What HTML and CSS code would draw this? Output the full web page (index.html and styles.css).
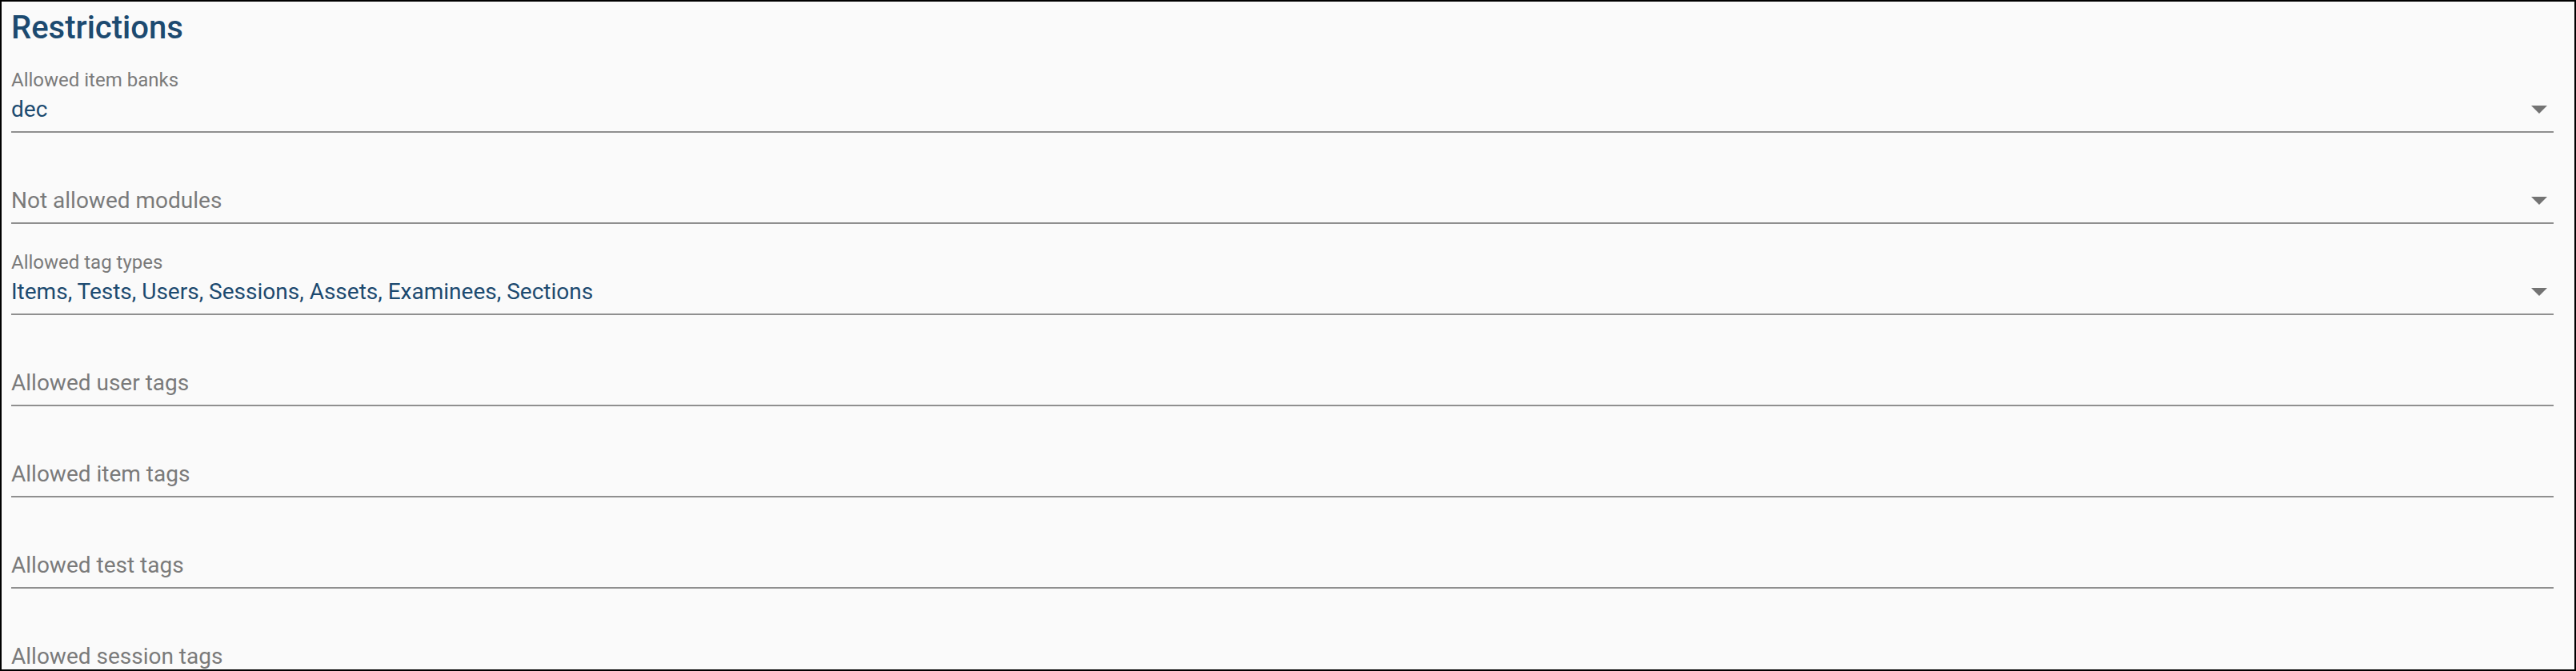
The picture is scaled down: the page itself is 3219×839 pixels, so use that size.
FILE: index.html
```html
<!DOCTYPE html>
<html lang="en">
  <head>
    <meta charset="UTF-8" />
    <meta name="viewport" content="width=device-width, initial-scale=1.0" />
    <title>Restrictions</title>
    <link rel="stylesheet" href="styles.css">
  </head>
  <body>
    <div class="page">
      <h2 class="title">Restrictions</h2>

      <div class="field">
        <label class="label">Allowed item banks</label>
        <div class="control">
          <span class="value">dec</span>
          <span class="arrow"></span>
        </div>
      </div>

      <div class="field">
        <label class="label"></label>
        <div class="control">
          <span class="placeholder">Not allowed modules</span>
          <span class="arrow"></span>
        </div>
      </div>

      <div class="field">
        <label class="label">Allowed tag types</label>
        <div class="control">
          <span class="value">Items, Tests, Users, Sessions, Assets, Examinees, Sections</span>
          <span class="arrow"></span>
        </div>
      </div>

      <div class="field">
        <label class="label"></label>
        <div class="control">
          <span class="placeholder">Allowed user tags</span>
        </div>
      </div>

      <div class="field">
        <label class="label"></label>
        <div class="control">
          <span class="placeholder">Allowed item tags</span>
        </div>
      </div>

      <div class="field">
        <label class="label"></label>
        <div class="control">
          <span class="placeholder">Allowed test tags</span>
        </div>
      </div>

      <div class="field">
        <label class="label"></label>
        <div class="control">
          <span class="placeholder">Allowed session tags</span>
        </div>
      </div>
    </div>
  </body>
</html>
```

FILE: styles.css
```css
* {
  margin: 0;
  padding: 0;
  box-sizing: border-box;
}

body {
  background: #fafafa;
  font-family: Roboto, "Noto Sans", sans-serif;
}

.page {
  height: 100vh;
  overflow: hidden;
  border: 2px solid #000;
  padding: 12px 26px 0 12px;
}

.title {
  font-size: 40px;
  font-weight: 500;
  line-height: 41px;
  color: #1c4a70;
}

.field {
  display: flex;
  flex-direction: column;
  padding: 31px 0 9px;
  margin-bottom: 3px;
  border-bottom: 2px solid #8f8f8f;
}

.label {
  display: block;
  height: 28px;
  font-size: 24px;
  line-height: 28px;
  color: #7a7a7a;
}

.control {
  display: flex;
  align-items: center;
  justify-content: space-between;
  height: 36px;
  margin-top: 5px;
  font-size: 28px;
  line-height: 36px;
}

.value {
  color: #1c4a70;
}

.placeholder {
  color: #7a7a7a;
}

/* select dropdown caret */
.arrow {
  width: 0;
  height: 0;
  margin-right: 8px;
  border-left: 10px solid transparent;
  border-right: 10px solid transparent;
  border-top: 10px solid #737373;
}
```
